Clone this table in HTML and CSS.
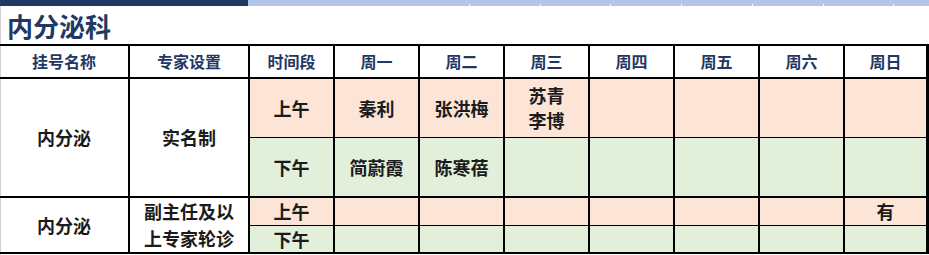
FILE: index.html
```html
<!DOCTYPE html>
<html lang="zh-CN">
<head>
<meta charset="utf-8">
<title>内分泌科</title>
<link rel="stylesheet" href="styles.css">
</head>
<body>
<div class="page">
  <div class="topbar">
    <div class="bar-dark"></div>
    <div class="bar-light"><div class="ticks"></div></div>
  </div>
  <h1 class="title">内分泌科</h1>
  <div class="schedule">
    <div class="cell head">挂号名称</div>
    <div class="cell head">专家设置</div>
    <div class="cell head">时间段</div>
    <div class="cell head">周一</div>
    <div class="cell head">周二</div>
    <div class="cell head">周三</div>
    <div class="cell head">周四</div>
    <div class="cell head">周五</div>
    <div class="cell head">周六</div>
    <div class="cell head last">周日</div>

    <div class="cell span block-end">内分泌</div>
    <div class="cell span block-end">实名制</div>
    <div class="cell am">上午</div>
    <div class="cell am">秦利</div>
    <div class="cell am">张洪梅</div>
    <div class="cell am two">苏青<br>李博</div>
    <div class="cell am"></div>
    <div class="cell am"></div>
    <div class="cell am"></div>
    <div class="cell am last"></div>

    <div class="cell pm block-end">下午</div>
    <div class="cell pm block-end">简蔚霞</div>
    <div class="cell pm block-end">陈寒蓓</div>
    <div class="cell pm block-end"></div>
    <div class="cell pm block-end"></div>
    <div class="cell pm block-end"></div>
    <div class="cell pm block-end"></div>
    <div class="cell pm block-end last"></div>

    <div class="cell span block-end">内分泌</div>
    <div class="cell span block-end two-tall">副主任及以<br>上专家轮诊</div>
    <div class="cell am">上午</div>
    <div class="cell am"></div>
    <div class="cell am"></div>
    <div class="cell am"></div>
    <div class="cell am"></div>
    <div class="cell am"></div>
    <div class="cell am"></div>
    <div class="cell am last">有</div>

    <div class="cell pm block-end">下午</div>
    <div class="cell pm block-end"></div>
    <div class="cell pm block-end"></div>
    <div class="cell pm block-end"></div>
    <div class="cell pm block-end"></div>
    <div class="cell pm block-end"></div>
    <div class="cell pm block-end"></div>
    <div class="cell pm block-end last"></div>
  </div>
</div>
</body>
</html>
```

FILE: styles.css
```css
* { box-sizing: border-box; }

html, body {
  margin: 0;
  padding: 0;
  background: #fff;
}

body {
  font-family: "Noto Sans CJK SC", "Noto Sans", sans-serif;
  width: 929px;
  height: 255px;
  overflow: hidden;
}

.page {
  width: 929px;
  height: 255px;
  box-shadow: inset 1px 0 #d2d2d2;
}

.topbar {
  display: flex;
  height: 6px;
}

.bar-dark {
  width: 248px;
  background: #203864;
}

.bar-light {
  flex: 1;
  background: #b4c6e7;
  display: flex;
  align-items: flex-end;
}

.ticks {
  margin-left: 221px;
  flex: 1;
  height: 2px;
  background: repeating-linear-gradient(to right, #ffffff 0 1px, transparent 1px 70.75px);
}

.title {
  margin: 0;
  height: 38px;
  padding-left: 7px;
  font-size: 26px;
  line-height: 40px;
  font-weight: 700;
  color: #1f3864;
}

.schedule {
  display: grid;
  grid-template-columns: 130px 120px 85px 85px 85px 85px 85px 85px 85px 84px;
  grid-template-rows: 33px 59px 60px 28px 28px;
  border-top: 2px solid #000;
}

.cell {
  display: flex;
  align-items: center;
  justify-content: center;
  text-align: center;
  border-right: 2px solid #000;
  border-bottom: 1px solid #000;
  font-size: 18px;
  font-weight: 700;
  color: #1b1b1b;
  line-height: 25px;
}

.cell.last { border-right-width: 3px; }

.head {
  font-size: 16px;
  color: #1f3864;
  border-bottom-width: 2px;
}

.span { grid-row: span 2; }

.block-end { border-bottom-width: 2px; }

.am { background: #fce4d6; }
.pm { background: #e2efda; }

.two { line-height: 25px; }
.two-tall { line-height: 27px; }
```
